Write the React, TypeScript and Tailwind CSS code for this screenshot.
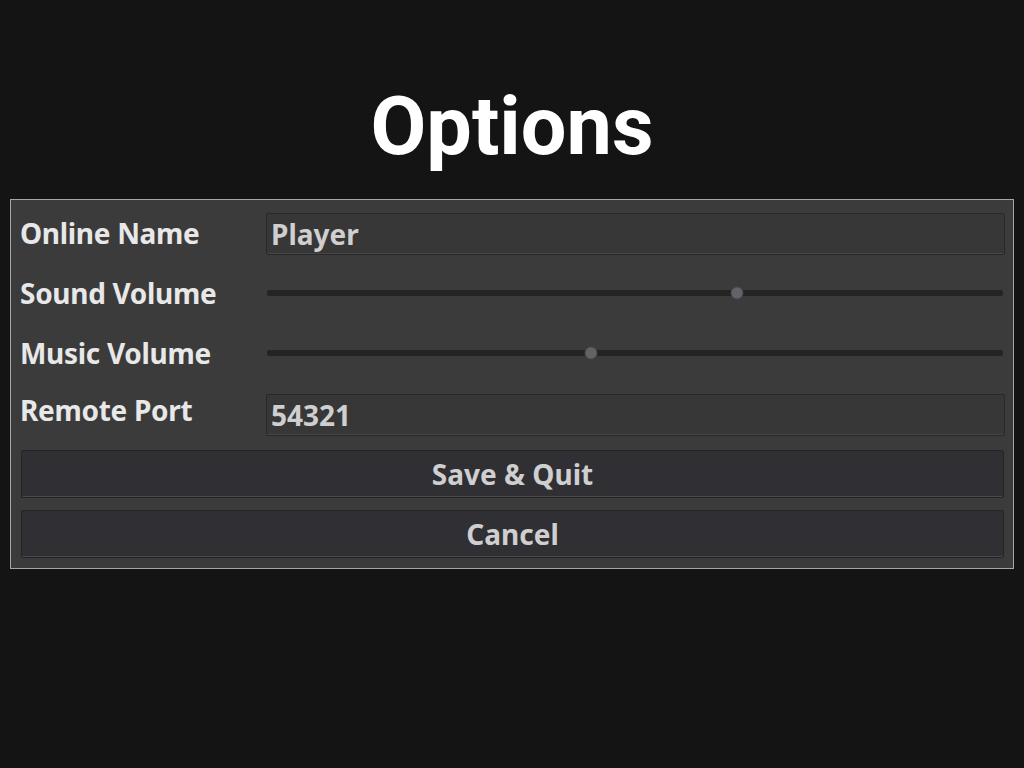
import React from 'react';

const labelFont = { fontFamily: '"Noto Sans", "DejaVu Sans", sans-serif' };

function Slider({ value }: { value: number }) {
  return (
    <div className="relative h-[6px] w-full rounded-[2px] bg-[#242424]">
      <div
        className="absolute top-1/2 h-[13px] w-[13px] -translate-x-1/2 -translate-y-1/2 rounded-full border border-[#4a4a4e] bg-[#626268]"
        style={{ left: `${value * 100}%` }}
      />
    </div>
  );
}

function Field({ value }: { value: string }) {
  return (
    <div className="flex h-[42px] items-center rounded-[2px] border border-[#282828] bg-[#373737] pl-[4px] shadow-[inset_0_-1px_0_#464646]">
      <span className="text-[28px] font-bold text-[#cfcfcf]" style={labelFont}>{value}</span>
    </div>
  );
}

function Button({ children }: { children: React.ReactNode }) {
  return (
    <button className="flex h-[48px] w-full items-center justify-center rounded-[2px] border border-[#242424] bg-[#302f34] shadow-[inset_0_-1px_0_#49484d]">
      <span className="text-[28px] font-bold text-[#cfcfcf]" style={labelFont}>{children}</span>
    </button>
  );
}

export default function App() {
  return (
    <div className="h-[768px] w-[1024px] bg-[#141414]">
      <div className="flex h-[199px] items-start justify-center pt-[86px]">
        <h1 className="text-[81px] font-bold leading-none text-white" style={{ fontFamily: 'Roboto, "Noto Sans", sans-serif' }}>Options</h1>
      </div>
      <div className="ml-[10px] h-[370px] w-[1004px] border border-[#a6a6a6] bg-[#3b3b3b] pl-[9px] pr-[8px] pt-[13px]">
        <div className="flex h-[42px] items-center">
          <div className="-mt-[3px] w-[246px] text-[28px] font-bold tracking-[-0.3px] text-[#e8e8e8]" style={labelFont}>Online Name</div>
          <div className="flex-1"><Field value="Player" /></div>
        </div>
        <div className="mt-[17px] flex h-[42px] items-center">
          <div className="w-[246px] text-[28px] font-bold tracking-[-0.3px] text-[#e8e8e8]" style={labelFont}>Sound Volume</div>
          <div className="flex-1 pl-[1px] pr-[2px]"><Slider value={0.638} /></div>
        </div>
        <div className="mt-[18px] flex h-[42px] items-center">
          <div className="w-[246px] text-[28px] font-bold tracking-[-0.3px] text-[#e8e8e8]" style={labelFont}>Music Volume</div>
          <div className="flex-1 pl-[1px] pr-[2px]"><Slider value={0.44} /></div>
        </div>
        <div className="mt-[20px] flex h-[42px] items-start">
          <div className="-mt-[5px] w-[246px] text-[28px] font-bold tracking-[-0.3px] text-[#e8e8e8]" style={labelFont}>Remote Port</div>
          <div className="flex-1"><Field value="54321" /></div>
        </div>
        <div className="mt-[14px] flex flex-col gap-[12px] pl-[1px] pr-[1px]">
          <Button>Save &amp; Quit</Button>
          <Button>Cancel</Button>
        </div>
      </div>
    </div>
  );
}
